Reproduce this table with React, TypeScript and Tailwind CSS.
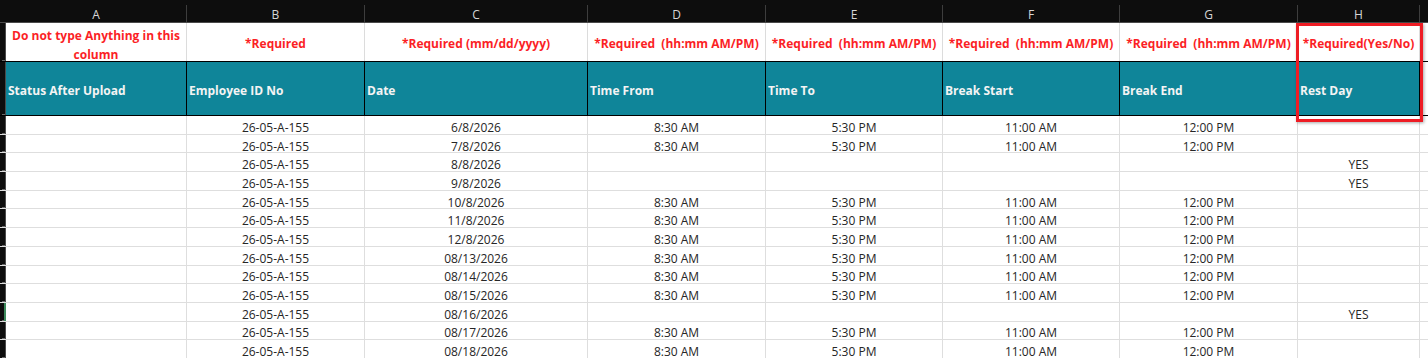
import React from "react";

type Col = { key: string; letter: string; width: string; req: string; title: string };

const COLS: Col[] = [
  { key: "status", letter: "A", width: "w-[181px]", req: "Do not type Anything in this column", title: "Status After Upload" },
  { key: "emp", letter: "B", width: "w-[178px]", req: "*Required", title: "Employee ID No" },
  { key: "date", letter: "C", width: "w-[223px]", req: "*Required (mm/dd/yyyy)", title: "Date" },
  { key: "from", letter: "D", width: "w-[178px]", req: "*Required\u00a0 (hh:mm AM/PM)", title: "Time From" },
  { key: "to", letter: "E", width: "w-[177px]", req: "*Required\u00a0 (hh:mm AM/PM)", title: "Time To" },
  { key: "bs", letter: "F", width: "w-[177px]", req: "*Required\u00a0 (hh:mm AM/PM)", title: "Break Start" },
  { key: "be", letter: "G", width: "w-[178px]", req: "*Required\u00a0 (hh:mm AM/PM)", title: "Break End" },
  { key: "rest", letter: "H", width: "w-[122px]", req: "*Required(Yes/No)", title: "Rest Day" },
];

const work = (date: string) => [" ", "26-05-A-155", date, "8:30 AM", "5:30 PM", "11:00 AM", "12:00 PM", ""];
const rest = (date: string) => [" ", "26-05-A-155", date, "", "", "", "", "YES"];

const ROWS: string[][] = [
  work("6/8/2026"),
  work("7/8/2026"),
  rest("8/8/2026"),
  rest("9/8/2026"),
  work("10/8/2026"),
  work("11/8/2026"),
  work("12/8/2026"),
  work("08/13/2026"),
  work("08/14/2026"),
  work("08/15/2026"),
  rest("08/16/2026"),
  work("08/17/2026"),
  work("08/18/2026"),
];

const Stub = ({ active }: { active?: boolean }) => (
  <div className="relative w-[6px] shrink-0 self-stretch bg-[#0d0d0d] border-r border-[#4a4a4a] flex flex-col justify-end items-end">
    {active && <div className="absolute right-[-1px] top-0 bottom-0 w-[2px] bg-[#3c8a5c]" />}
    <div className="w-[3px] h-px bg-[#6a6a6a]" />
  </div>
);

export default function App() {
  return (
    <div
      className="relative w-[1428px] h-[358px] overflow-hidden bg-white"
      style={{ fontFamily: '"Open Sans", "Liberation Sans", sans-serif' }}
    >
      {/* column letters */}
      <div className="flex h-[23px] bg-[#0d0d0d] border-b border-[#4a4a4a]">
        <div className="w-[6px] shrink-0" />
        {COLS.map((c) => (
          <div key={c.key} className={`${c.width} shrink-0 flex items-end`}>
            <div className="flex-1 h-[17px] flex items-center justify-center pt-[3px] text-[12px] text-[#d6d6d6] border-r border-[#3d3d3d]">
              {c.letter}
            </div>
          </div>
        ))}
        <div className="flex-1" />
      </div>

      {/* required hints */}
      <div className="flex h-[39px] border-b border-black">
        <Stub />
        {COLS.map((c, i) => (
          <div
            key={c.key}
            className={`${c.width} shrink-0 border-r border-[#dcdcdc] flex items-center justify-center text-center px-1 ${i === 0 ? "pt-[6px]" : "pt-[2px]"} text-[12px] leading-[19px] font-bold text-[#fb1f26] whitespace-pre-wrap`}
          >
            {c.req}
          </div>
        ))}
        <div className="flex-1" />
      </div>

      {/* titles */}
      <div className="flex h-[54px] border-b border-black">
        <Stub />
        {COLS.map((c) => (
          <div
            key={c.key}
            className={`${c.width} shrink-0 border-r border-black bg-[#0f8599] flex items-center pl-[2px] pt-[4px] text-[12px] font-bold text-[#f4f4f4]`}
          >
            {c.title}
          </div>
        ))}
        <div className="flex-1" />
      </div>

      {/* data rows */}
      {ROWS.map((r, i) => (
        <div key={i} className="flex h-[18.7px] border-b border-[#dedede]">
          <Stub active={i === 10} />
          {COLS.map((c, j) => (
            <div
              key={c.key}
              className={`${c.width} shrink-0 border-r border-[#dedede] flex items-center justify-center pt-[6px] text-[12px] text-[#262626] leading-none`}
            >
              {r[j]}
            </div>
          ))}
          <div className="flex-1" />
        </div>
      ))}

      {/* highlight box round column H */}
      <div className="absolute left-[1296px] top-[23px] w-[127px] h-[99px] border-[3px] border-[#ee1c24] shadow-[1px_1px_3px_rgba(0,0,0,0.35)]" />
    </div>
  );
}
